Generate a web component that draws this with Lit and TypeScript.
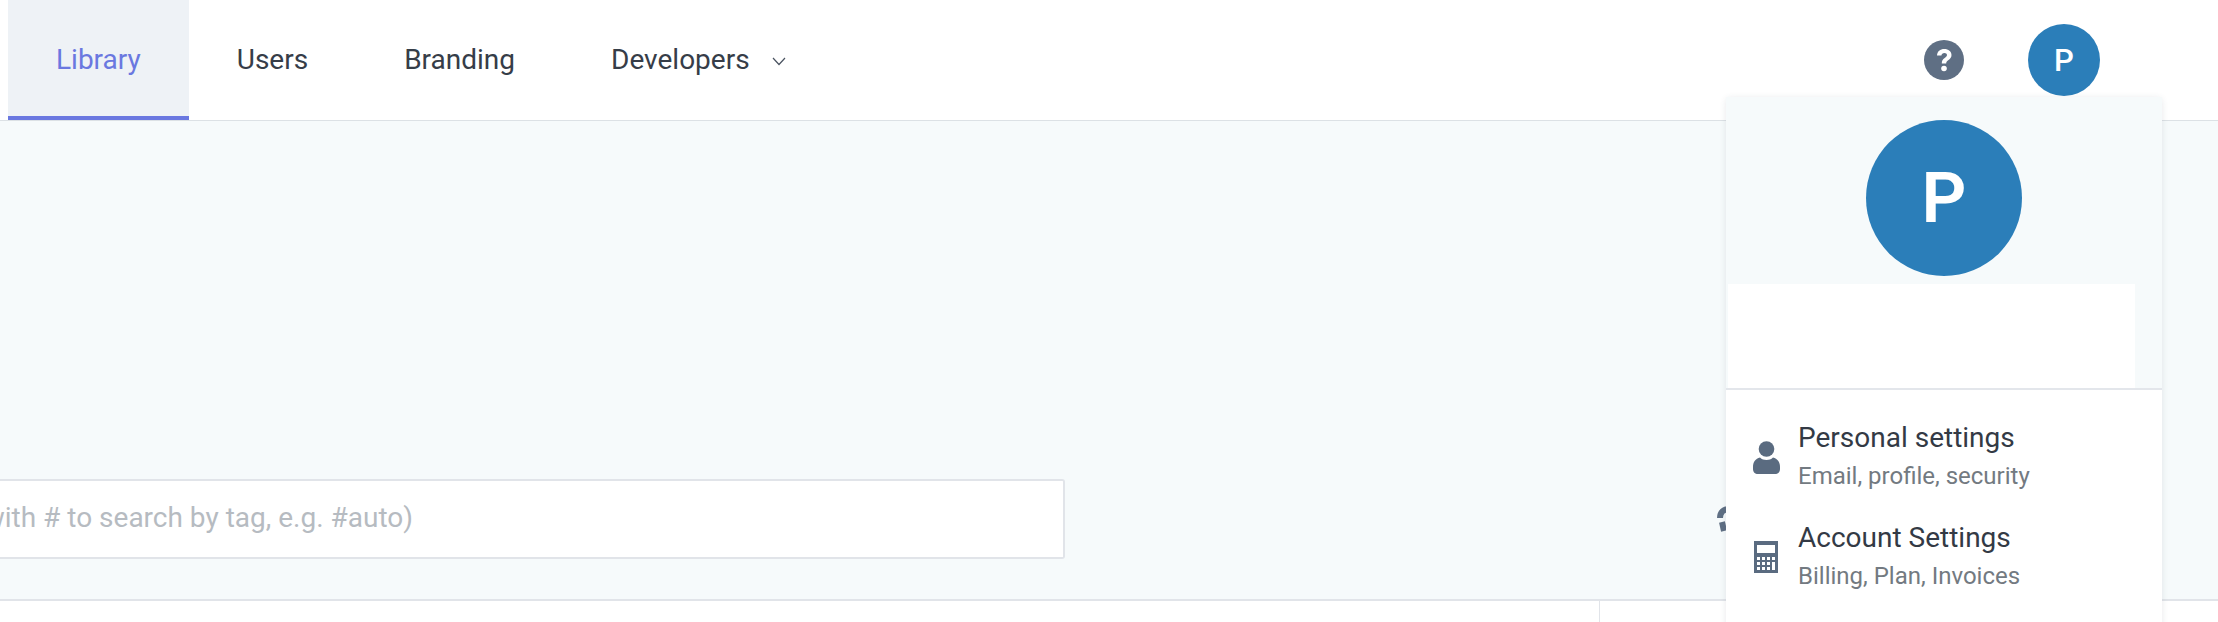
import { LitElement, html, css } from "lit";
import { customElement } from "lit/decorators.js";

@customElement("app-root")
export class AppRoot extends LitElement {
  static styles = css`
    :host {
      display: block;
      position: relative;
      width: 2218px;
      height: 622px;
      overflow: hidden;
      background: #fff;
      font-family: Roboto, "Liberation Sans", sans-serif;
      color: #363d48;
    }
    .nav {
      display: flex;
      align-items: stretch;
      height: 120px;
      padding-left: 8px;
      box-sizing: content-box;
      border-bottom: 1px solid #dce1e5;
    }
    .tab {
      display: flex;
      align-items: center;
      padding: 0 48px;
      font-size: 28px;
      box-sizing: border-box;
      border-bottom: 4px solid transparent;
      padding-top: 3px;
    }
    .tab.active {
      background: #eef2f6;
      color: #6a78e0;
      border-bottom-color: #6a78e0;
    }
    .caret { margin-left: 22px; margin-top: 4px; }
    .right {
      margin-left: auto;
      display: flex;
      align-items: center;
      padding-right: 118px;
    }
    .help { display: block; margin-right: 64px; }
    .avatar {
      display: flex;
      align-items: center;
      justify-content: center;
      width: 72px;
      height: 72px;
      border-radius: 50%;
      background: #2b7eb9;
      color: #fff;
      font-size: 31px;
      font-weight: 500;
    }
    .hero {
      display: flex;
      flex-direction: column;
      justify-content: flex-end;
      height: 480px;
      box-sizing: border-box;
      padding-bottom: 40px;
      background: #f6fafb;
      border-bottom: 2px solid #e1e4e9;
    }
    .search {
      display: flex;
      align-items: center;
      justify-content: flex-end;
      width: 1065px;
      height: 80px;
      box-sizing: border-box;
      padding: 0 650px 3px 0;
      background: #fff;
      border: 2px solid #e1e4e9;
      border-left: 0;
      border-radius: 0 3px 3px 0;
      font-size: 28px;
      color: #b6bbc1;
      white-space: nowrap;
      overflow: hidden;
    }
    .below {
      display: flex;
      justify-content: flex-end;
      height: 21px;
    }
    .rail { width: 618px; border-left: 1px solid #e1e4e9; }
    .menu {
      position: absolute;
      left: 1726px;
      top: 97px;
      width: 436px;
      height: 560px;
      background: #fff;
      border-radius: 4px 4px 0 0;
      box-shadow: 0 1px 6px rgba(60, 70, 90, 0.12);
    }
    .menu-top {
      display: flex;
      flex-direction: column;
      height: 293px;
      box-sizing: border-box;
      background: #f6fafb;
      border-bottom: 2px solid #e3e6eb;
      padding: 23px 0 0 2px;
    }
    .big-avatar {
      display: flex;
      align-items: center;
      justify-content: center;
      align-self: flex-start;
      margin-left: 138px;
      width: 156px;
      height: 156px;
      border-radius: 50%;
      background: #2b7eb9;
      color: #fff;
      font-size: 70px;
      font-weight: 600;
    }
    .blank {
      width: 407px;
      flex: 1;
      margin-top: 8px;
      background: #fff;
    }
    .items {
      display: flex;
      flex-direction: column;
      padding: 29px 0 0 26px;
      gap: 24px;
    }
    .item {
      display: flex;
      align-items: center;
    }
    .icon { width: 28px; display: flex; justify-content: center; margin-right: 18px; }
    .title { font-size: 28px; line-height: 38px; color: #333a45; }
    .sub { font-size: 24px; line-height: 38px; color: #737a81; }
    .behind {
      position: absolute;
      left: 1716px;
      top: 506px;
    }
  `;

  render() {
    return html`
      <div class="nav">
        <div class="tab active">Library</div>
        <div class="tab">Users</div>
        <div class="tab">Branding</div>
        <div class="tab">Developers
          <svg class="caret" width="14" height="9" viewBox="0 0 14 9" fill="none" stroke="#4a5360" stroke-width="1.2"><path d="M1 1l6 6.500L13 1"/></svg>
        </div>
        <div class="right">
          <svg class="help" width="40" height="40" viewBox="0 0 40 40">
            <circle cx="20" cy="20" r="20" fill="#5f6f84"/>
            <path d="M13 15.500c.2-4.200 3.200-6.500 7.300-6.500 4.100 0 7.200 2.400 7.200 5.900 0 2.500-1.400 4-3.300 5.300-1.500 1-2 1.700-2 3.300h-4.400c-.1-2.700.9-4.300 2.900-5.600 1.400-.9 2.300-1.700 2.300-2.800 0-1.300-1.100-2.200-2.600-2.200-1.700 0-2.800 1-3 2.600z" fill="#fff"/>
            <circle cx="20" cy="28.500" r="2.800" fill="#fff"/>
          </svg>
          <div class="avatar">P</div>
        </div>
      </div>
      <div class="hero">
        <div class="search"><span>(start with # to search by tag, e.g. #auto)</span></div>
      </div>
      <div class="below"><div class="rail"></div></div>
      <svg class="behind" width="20" height="32" viewBox="0 0 20 32" fill="none" stroke="#5f6f84" stroke-width="6"><path d="M4 12C4 6 8 3 13 3s8 3 8 8"/><path d="M6 16l2 9" /></svg>
      <div class="menu">
        <div class="menu-top">
          <div class="big-avatar">P</div>
          <div class="blank"></div>
        </div>
        <div class="items">
          <div class="item">
            <div class="icon">
              <svg width="27" height="33" viewBox="0 0 27 33" fill="#5a6b80">
                <circle cx="13.500" cy="8" r="7.800"/>
                <path d="M0 26c0-5 2.500-8.500 7-9.500 1.800 1.800 4 2.500 6.500 2.500s4.700-.7 6.500-2.500c4.500 1 7 4.500 7 9.500v2c0 3-2 5-5 5H5c-3 0-5-2-5-5z"/>
              </svg>
            </div>
            <div>
              <div class="title">Personal settings</div>
              <div class="sub">Email, profile, security</div>
            </div>
          </div>
          <div class="item">
            <div class="icon">
              <svg width="24" height="32" viewBox="0 0 24 32">
                <rect width="24" height="32" fill="#5a6b80"/>
                <rect x="3" y="4" width="18" height="8" fill="#fff"/>
                <g fill="#fff">
                  <rect x="3" y="16" width="3" height="3"/><rect x="8" y="16" width="3" height="3"/><rect x="13" y="16" width="3" height="3"/><rect x="18" y="16" width="3" height="3"/>
                  <rect x="3" y="21" width="3" height="3"/><rect x="8" y="21" width="3" height="3"/><rect x="13" y="21" width="3" height="3"/>
                  <rect x="3" y="26" width="3" height="3"/><rect x="8" y="26" width="3" height="3"/><rect x="13" y="26" width="3" height="3"/><rect x="18" y="21" width="3" height="8"/>
                </g>
              </svg>
            </div>
            <div>
              <div class="title">Account Settings</div>
              <div class="sub">Billing, Plan, Invoices</div>
            </div>
          </div>
        </div>
      </div>
    `;
  }
}
